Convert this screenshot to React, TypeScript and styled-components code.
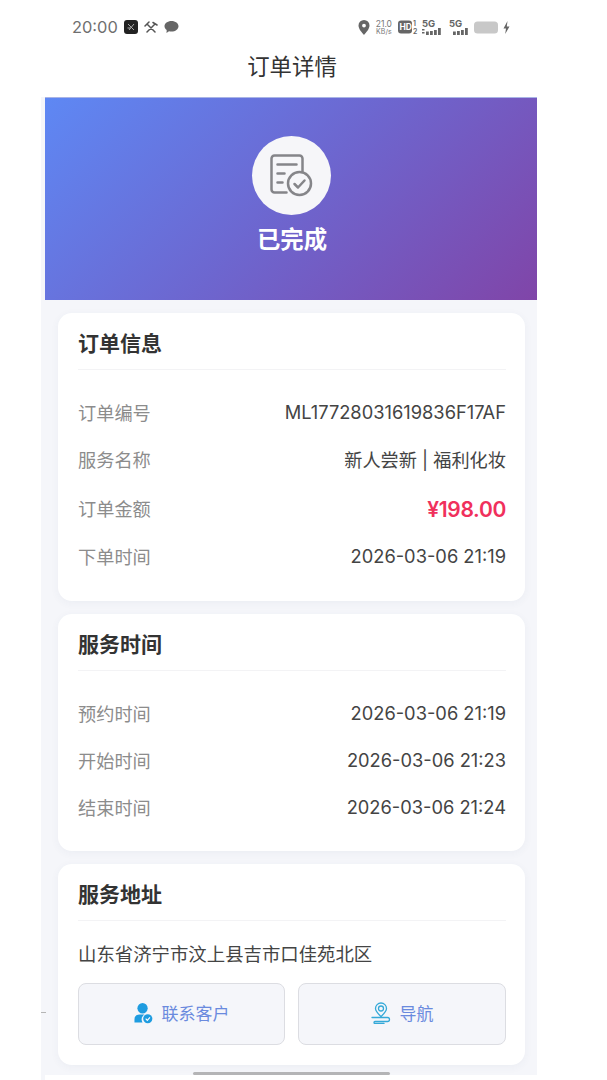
import React from "react";
import styled, { createGlobalStyle } from "styled-components";

const FONT = `Inter, "Noto Sans CJK SC", sans-serif`;

const GlobalStyle = createGlobalStyle`
  html, body {
    margin: 0;
    padding: 0;
    background: #fff;
  }
  body {
    font-family: ${FONT};
  }
`;

const Screen = styled.div`
  position: relative;
  width: 607px;
  height: 1080px;
  overflow: hidden;
  background: #fff;
`;

const StatusBar = styled.div`
  display: flex;
  justify-content: space-between;
  align-items: center;
  height: 54px;
  padding: 0 97px 0 72px;
  box-sizing: border-box;
  color: #666;
`;

const StatusGroup = styled.div`
  display: flex;
  align-items: center;
  gap: 6px;
`;

const Clock = styled.span`
  font-size: 16.4px;
  color: #6f6f6f;
`;

const Speed = styled.div`
  display: flex;
  flex-direction: column;
  align-items: center;
  font-size: 8.5px;
  line-height: 8px;
  color: #777;
`;

const SpeedUnit = styled.span`
  font-size: 7px;
  line-height: 7px;
`;

const TitleBar = styled.div`
  display: flex;
  align-items: center;
  justify-content: center;
  width: 494px;
  height: 28px;
  margin: -3px 0 0 45px;
  padding-bottom: 18px;
  font-size: 22.4px;
  color: #333;
`;

const Column = styled.main`
  width: 496px;
  margin-left: 41px;
  height: 983px;
  background: #f5f6fa;
`;

const Hero = styled.section`
  margin-left: 4px;
  height: 203px;
  background: linear-gradient(135deg, #5e88f4 0%, #6d66cf 50%, #8045a8 100%);
  border-top: 1px solid #a9b4e6;
  box-sizing: border-box;
  display: flex;
  flex-direction: column;
  align-items: center;
  padding-top: 38px;
`;

const StatusCircle = styled.div`
  width: 79px;
  height: 79px;
  border-radius: 50%;
  background: #f6f6f9;
  display: flex;
  align-items: center;
  justify-content: center;
`;

const StatusText = styled.div`
  margin-top: 9px;
  padding-left: 2px;
  font-size: 23.4px;
  line-height: 32px;
  font-weight: 700;
  color: #fff;
`;

const Cards = styled.div`
  display: flex;
  flex-direction: column;
  gap: 13px;
  padding: 13px 12px 0 17px;
`;

const Card = styled.section<{ $height: number }>`
  height: ${(p) => p.$height}px;
  box-sizing: border-box;
  padding: 0 19px 0 20px;
  background: #fff;
  border-radius: 14px;
  box-shadow: 0 2px 8px rgba(60, 70, 110, 0.05);
`;

const CardTitle = styled.h2`
  margin: 0;
  height: 57px;
  padding-top: 1px;
  box-sizing: border-box;
  display: flex;
  align-items: center;
  font-size: 21px;
  font-weight: 700;
  color: #333;
  border-bottom: 1px solid #f3f3f5;
`;

const Rows = styled.div`
  padding-top: 18px;
`;

const Row = styled.div<{ $height: number }>`
  height: ${(p) => p.$height}px;
  display: flex;
  justify-content: space-between;
  align-items: center;
`;

const Label = styled.span`
  font-size: 18.2px;
  color: #8c8c8c;
`;

const Value = styled.span<{ $cjk?: boolean }>`
  font-size: ${(p) => (p.$cjk ? "18.2px" : "18.3px")};
  color: #444;
`;

const Price = styled.span`
  padding-top: 3px;
  font-size: 21px;
  font-weight: 600;
  letter-spacing: -0.3px;
  color: #f0305c;
`;

const Address = styled.div`
  margin-top: 17px;
  height: 30px;
  display: flex;
  align-items: center;
  font-size: 18.4px;
  color: #444;
`;

const Actions = styled.div`
  display: grid;
  grid-template-columns: 207px 1fr;
  gap: 13px;
  margin-top: 15px;
`;

const ActionButton = styled.button`
  height: 62px;
  display: flex;
  align-items: center;
  justify-content: center;
  gap: 9px;
  padding: 0 0 3px;
  background: #f5f6fa;
  border: 1px solid #dcdde2;
  border-radius: 8px;
  font-family: ${FONT};
  font-size: 17px;
  color: #6a8ade;
`;

const HomeIndicator = styled.div`
  position: absolute;
  left: 193px;
  bottom: 5px;
  width: 197px;
  height: 3px;
  border-radius: 2px;
  background: #b4b4b6;
`;

const EdgeTick = styled.div`
  position: absolute;
  left: 41px;
  top: 1012px;
  width: 5px;
  height: 1px;
  background: #b5b5b5;
`;

const BottomStrip = styled.div`
  position: absolute;
  left: 45px;
  top: 1075px;
  width: 492px;
  height: 5px;
  background: #fff;
`;

const SignalIcon = ({ extra }: { extra?: boolean }) => (
  <svg width="21" height="17" viewBox="0 0 21 17">
    <text x="0" y="8" fontSize="9.500" fontWeight="700" fontFamily="Inter, sans-serif" fill="#666">5G</text>
    {extra && <rect x="0" y="10" width="2.500" height="1.500" fill="#666" />}
    {extra && <rect x="0" y="13" width="2.500" height="1.500" fill="#666" />}
    <rect x="4" y="12.500" width="2.800" height="3.500" fill="#666" />
    <rect x="8" y="12" width="2.800" height="4" fill="#666" />
    <rect x="12" y="11" width="2.800" height="5" fill="#666" />
    <rect x="16" y="9" width="2.800" height="7" fill="#666" />
  </svg>
);

const OrderCheckIcon = () => (
  <svg width="46" height="46" viewBox="0 0 46 46" fill="none" stroke="#858589" strokeWidth="2.500" strokeLinecap="round" strokeLinejoin="round">
    <path d="M18.500 39.500H6.500a3 3 0 0 1-3-3v-31a3 3 0 0 1 3-3h25a3 3 0 0 1 3 3v13" />
    <path d="M9.500 11.500h19M9.500 20.500h7M9.500 29.500h5" />
    <circle cx="31.500" cy="30.500" r="11.500" />
    <path d="M26.500 31l3.500 3.500 6.500-7" />
  </svg>
);

const ContactIcon = () => (
  <svg width="19" height="22" viewBox="0 0 20 22">
    <circle cx="9" cy="6" r="5.400" fill="#1e9ce0" />
    <path d="M0.500 21v-3.500C0.500 14 3 12.500 6 12.500h5c-2 1.500-3 3.300-3 5 0 1.300.4 2.500 1 3.500z" fill="#1e9ce0" />
    <circle cx="14.500" cy="17" r="4.800" fill="#1e9ce0" />
    <path d="M12.300 17l1.700 1.700 2.800-3" fill="none" stroke="#fff" strokeWidth="1.200" />
  </svg>
);

const NavigateIcon = () => (
  <svg width="20" height="22" viewBox="0 0 20 22" fill="none" stroke="#35a9d8" strokeWidth="1.300" strokeLinecap="round" strokeLinejoin="round">
    <path d="M10 14.500c-3-2.800-5.500-5-5.500-8a5.500 5.500 0 0 1 11 0c0 3-2.500 5.200-5.500 8z" />
    <circle cx="10" cy="6.500" r="2.500" />
    <path d="M1 15.500h15.500a2 2 0 0 1 0 4H4a1 1 0 0 0 0 2h9" />
  </svg>
);

const App = () => {
  return (
    <Screen>
      <GlobalStyle />
      <StatusBar>
        <StatusGroup>
          <Clock>20:00</Clock>
          <svg width="14" height="14" viewBox="0 0 14 14">
            <rect width="14" height="14" rx="3" fill="#222" />
            <path d="M4 4l6 6M10 4l-5 6M3.500 8h3" stroke="#aaa" strokeWidth="1" />
          </svg>
          <svg width="14" height="13" viewBox="0 0 14 13" fill="none" stroke="#555" strokeWidth="1.500" strokeLinecap="round">
            <path d="M3 3l8 8M11 3l-8 8M1 5l4-4M9 1.500l4 2.500" />
          </svg>
          <svg width="15" height="14" viewBox="0 0 15 14">
            <path d="M7.500 1C11.400 1 14.500 3.400 14.500 6.300S11.400 11.600 7.500 11.600c-.9 0-1.700-.1-2.500-.4L2.500 13l.2-3C1.300 9 .5 7.700.5 6.300.5 3.400 3.600 1 7.500 1z" fill="#666" />
          </svg>
        </StatusGroup>
        <StatusGroup>
          <svg width="12" height="15" viewBox="0 0 12 15">
            <path fillRule="evenodd" d="M6 0a5.500 5.500 0 0 1 5.500 5.500C11.500 9 8 12.500 6 15 4 12.500.5 9 .5 5.500A5.500 5.500 0 0 1 6 0zm0 3.700a1.900 1.900 0 1 0 0 3.800 1.900 1.900 0 0 0 0-3.800z" fill="#666" />
          </svg>
          <Speed>
            <span>21.0</span>
            <SpeedUnit>KB/s</SpeedUnit>
          </Speed>
          <svg width="20" height="14" viewBox="0 0 20 14" style={{ marginRight: -2 }}>
            <rect width="14" height="13" y="0.500" rx="3" fill="#666" />
            <text x="1.500" y="10" fontSize="8.500" fontWeight="700" fontFamily="Inter, sans-serif" fill="#fff">HD</text>
            <text x="15" y="6" fontSize="7" fontWeight="600" fontFamily="Inter, sans-serif" fill="#666">1</text>
            <text x="15" y="13.500" fontSize="7" fontWeight="600" fontFamily="Inter, sans-serif" fill="#666">2</text>
          </svg>
          <SignalIcon extra />
          <SignalIcon />
          <svg width="25" height="13" viewBox="0 0 25 13" style={{ marginLeft: -2 }}>
            <rect width="24" height="12" y="0.500" rx="3.500" fill="#c8c8c8" />
          </svg>
          <svg width="7" height="13" viewBox="0 0 7 13" style={{ marginLeft: -2 }}>
            <path d="M4.500 0L0.500 7.500H3L2.200 13 6.500 5.500H3.800z" fill="#666" />
          </svg>
        </StatusGroup>
      </StatusBar>
      <TitleBar>订单详情</TitleBar>
      <Column>
        <Hero>
          <StatusCircle>
            <OrderCheckIcon />
          </StatusCircle>
          <StatusText>已完成</StatusText>
        </Hero>
        <Cards>
          <Card $height={288}>
            <CardTitle>订单信息</CardTitle>
            <Rows>
              <Row $height={47}><Label>订单编号</Label><Value>ML17728031619836F17AF</Value></Row>
              <Row $height={47}><Label>服务名称</Label><Value $cjk>新人尝新 | 福利化妆</Value></Row>
              <Row $height={51}><Label>订单金额</Label><Price>¥198.00</Price></Row>
              <Row $height={45}><Label>下单时间</Label><Value>2026-03-06 21:19</Value></Row>
            </Rows>
          </Card>
          <Card $height={237}>
            <CardTitle>服务时间</CardTitle>
            <Rows>
              <Row $height={47}><Label>预约时间</Label><Value>2026-03-06 21:19</Value></Row>
              <Row $height={47}><Label>开始时间</Label><Value>2026-03-06 21:23</Value></Row>
              <Row $height={47}><Label>结束时间</Label><Value>2026-03-06 21:24</Value></Row>
            </Rows>
          </Card>
          <Card $height={201}>
            <CardTitle>服务地址</CardTitle>
            <Address>山东省济宁市汶上县吉市口佳苑北区</Address>
            <Actions>
              <ActionButton><ContactIcon />联系客户</ActionButton>
              <ActionButton><NavigateIcon />导航</ActionButton>
            </Actions>
          </Card>
        </Cards>
      </Column>
      <BottomStrip />
      <EdgeTick />
      <HomeIndicator />
    </Screen>
  );
};

export default App;
